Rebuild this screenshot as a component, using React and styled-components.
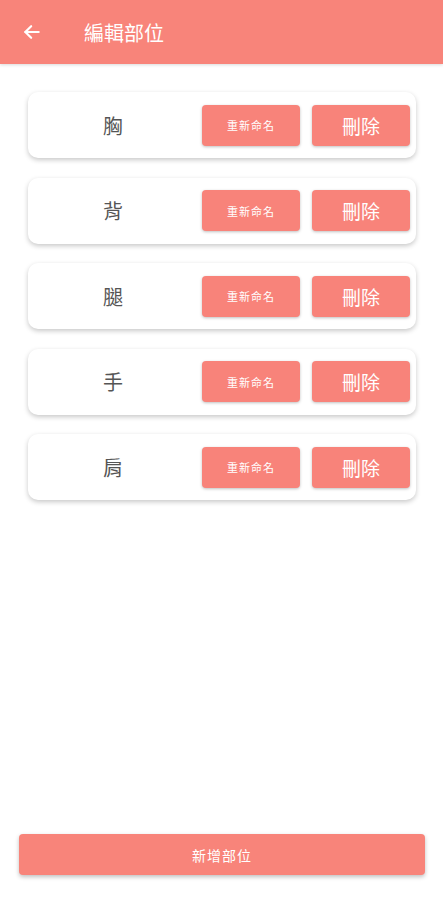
import React from "react";
import styled, { createGlobalStyle } from "styled-components";

const Global = createGlobalStyle`
  html, body { margin: 0; padding: 0; background: #fff; }
  body { font-family: Roboto, "Noto Sans CJK TC", "Noto Sans", sans-serif; }
  * { box-sizing: border-box; }
`;

const Page = styled.div`
  width: 443px;
  height: 900px;
  display: flex;
  flex-direction: column;
  background: #fff;
`;

const Header = styled.header`
  height: 64px;
  background: #f8847a;
  display: flex;
  align-items: center;
  padding-left: 22px;
  gap: 42px;
  box-shadow: 0 1px 3px rgba(0,0,0,0.15);
`;

const Title = styled.h1`
  margin: 0;
  font-size: 20px;
  font-weight: 400;
  color: #fff;
  font-family: "Noto Sans CJK TC", sans-serif;
`;

const List = styled.div`
  display: flex;
  flex-direction: column;
  gap: 19.5px;
  padding: 28px 27px 0 28px;
  flex: 1;
`;

const Card = styled.div`
  height: 66px;
  background: #fff;
  border-radius: 10px;
  box-shadow: 0 2px 5px rgba(0,0,0,0.22);
  display: flex;
  align-items: center;
  padding-right: 6px;
`;

const Name = styled.div`
  flex: 1;
  text-align: center;
  font-size: 20px;
  color: #555;
  padding-right: 4px;
  font-family: "Noto Sans CJK TC", sans-serif;
`;

const Btn = styled.button`
  width: 98px;
  height: 41px;
  border: none;
  border-radius: 4px;
  background: #f8837a;
  color: #fff;
  font-family: "Noto Sans CJK TC", sans-serif;
  font-size: ${p => (p.$big ? "19px" : "11px")};
  letter-spacing: ${p => (p.$big ? "0" : "1px")};
  margin-left: ${p => (p.$big ? "12px" : "0")};
  box-shadow: 0 1px 3px rgba(0,0,0,0.25);
  display: flex;
  align-items: center;
  justify-content: center;
  padding: 0;
`;

const Footer = styled.div`
  padding: 0 18px 25px 19px;
`;

const AddBtn = styled.button`
  width: 100%;
  height: 41px;
  border: none;
  border-radius: 4px;
  background: #f8847a;
  color: #fff;
  font-family: "Noto Sans CJK TC", sans-serif;
  font-size: 14px;
  letter-spacing: 1px;
  box-shadow: 0 2px 4px rgba(0,0,0,0.25);
`;

const parts = ["胸", "背", "腿", "手", "肩"];

export default function App() {
  return (
    <Page>
      <Global />
      <Header>
        <svg width="20" height="20" viewBox="0 0 24 24" fill="none" stroke="#fff" strokeWidth="2.6" strokeLinecap="round" strokeLinejoin="round">
          <path d="M20 12H4" />
          <path d="M11 5l-7 7 7 7" />
        </svg>
        <Title>編輯部位</Title>
      </Header>
      <List>
        {parts.map(p => (
          <Card key={p}>
            <Name>{p}</Name>
            <Btn>重新命名</Btn>
            <Btn $big>刪除</Btn>
          </Card>
        ))}
      </List>
      <Footer>
        <AddBtn>新增部位</AddBtn>
      </Footer>
    </Page>
  );
}
